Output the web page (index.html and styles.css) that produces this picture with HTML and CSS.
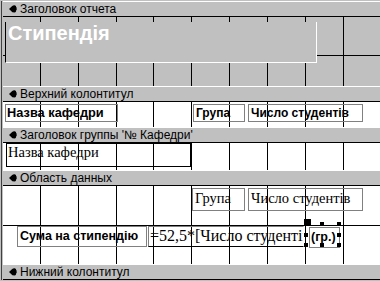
FILE: index.html
```html
<!DOCTYPE html>
<html lang="uk">
<head>
<meta charset="utf-8">
<title>Стипендія — конструктор отчета</title>
<link rel="stylesheet" href="styles.css">
</head>
<body>
<div class="designer">

  <div class="bar">
    <svg class="bar-icon" viewBox="0 0 8 8" aria-hidden="true"><path d="M0 4 L3.2 1 C4 0.3 5.2 0 6 0.4 C7 0.6 7.3 1.3 7 2 C8 2.4 8 3.4 7.4 3.8 C8 4.3 7.8 5.4 7 5.6 C7.3 6.4 6.8 7.4 5.6 7.4 L3.4 7.2 Z"/></svg>
    <span>Заголовок отчета</span>
  </div>
  <div class="section sec-report">
    <div class="ctl title">Стипендія</div>
  </div>

  <div class="bar">
    <svg class="bar-icon" viewBox="0 0 8 8" aria-hidden="true"><path d="M0 4 L3.2 1 C4 0.3 5.2 0 6 0.4 C7 0.6 7.3 1.3 7 2 C8 2.4 8 3.4 7.4 3.8 C8 4.3 7.8 5.4 7 5.6 C7.3 6.4 6.8 7.4 5.6 7.4 L3.4 7.2 Z"/></svg>
    <span>Верхний колонтитул</span>
  </div>
  <div class="section sec-page white">
    <div class="ctl label ph-name">Назва кафедри</div>
    <div class="ctl label ph-group">Група</div>
    <div class="ctl label ph-count">Число студентів</div>
  </div>

  <div class="bar">
    <svg class="bar-icon" viewBox="0 0 8 8" aria-hidden="true"><path d="M0 4 L3.2 1 C4 0.3 5.2 0 6 0.4 C7 0.6 7.3 1.3 7 2 C8 2.4 8 3.4 7.4 3.8 C8 4.3 7.8 5.4 7 5.6 C7.3 6.4 6.8 7.4 5.6 7.4 L3.4 7.2 Z"/></svg>
    <span>Заголовок группы '&#x2116; Кафедри'</span>
  </div>
  <div class="section sec-group white">
    <div class="ctl field gh-name">Назва кафедри</div>
  </div>

  <div class="bar">
    <svg class="bar-icon" viewBox="0 0 8 8" aria-hidden="true"><path d="M0 4 L3.2 1 C4 0.3 5.2 0 6 0.4 C7 0.6 7.3 1.3 7 2 C8 2.4 8 3.4 7.4 3.8 C8 4.3 7.8 5.4 7 5.6 C7.3 6.4 6.8 7.4 5.6 7.4 L3.4 7.2 Z"/></svg>
    <span>Область данных</span>
  </div>
  <div class="section sec-data white">
    <div class="ctl field gray d-group">Група</div>
    <div class="ctl field gray d-count">Число студентів</div>
    <div class="ctl label d-sum">Сума на стипендію</div>
    <div class="ctl field expr">=52,5*[Число студентів]</div>
    <div class="ctl label d-gr">(гр.)</div>
    <span class="handle big h-tl"></span>
    <span class="handle h-tm"></span>
    <span class="handle h-tr"></span>
    <span class="handle h-ml"></span>
    <span class="handle h-mr"></span>
    <span class="handle h-bl"></span>
    <span class="handle h-bm"></span>
    <span class="handle h-br"></span>
  </div>

  <div class="bar">
    <svg class="bar-icon" viewBox="0 0 8 8" aria-hidden="true"><path d="M0 4 L3.2 1 C4 0.3 5.2 0 6 0.4 C7 0.6 7.3 1.3 7 2 C8 2.4 8 3.4 7.4 3.8 C8 4.3 7.8 5.4 7 5.6 C7.3 6.4 6.8 7.4 5.6 7.4 L3.4 7.2 Z"/></svg>
    <span>Нижний колонтитул</span>
  </div>

</div>
</body>
</html>
```
FILE: styles.css
```css
html, body {
  margin: 0;
  padding: 0;
}
body {
  background: #c0c0c0;
  width: 380px;
  height: 281px;
  overflow: hidden;
  padding-top: 1px;
  box-sizing: border-box;
  font-family: "Liberation Sans", Arial, sans-serif;
}
.designer {
  margin-left: 1px;
  border-left: 1px solid #404040;
  padding-left: 1px;
}

/* section selector bars */
.bar {
  height: 14px;
  border-top: 1px solid #ffffff;
  border-bottom: 1px solid #000000;
  background: #c0c0c0;
  display: flex;
  align-items: center;
  gap: 3px;
  padding-left: 6px;
  font-size: 12px;
  color: #000;
  white-space: nowrap;
}
.bar-icon {
  width: 8px;
  height: 8px;
  fill: #000;
  flex: none;
}

/* design surface sections with the 1 cm grid */
.section {
  position: relative;
  background-color: #c0c0c0;
  background-image:
    linear-gradient(#000, #000), linear-gradient(#000, #000), linear-gradient(#000, #000),
    linear-gradient(#000, #000), linear-gradient(#000, #000), linear-gradient(#000, #000),
    linear-gradient(#000, #000), linear-gradient(#000, #000), linear-gradient(#000, #000);
  background-repeat: no-repeat;
  background-size: 1px 100%;
  background-position:
    37px 0, 75px 0, 113px 0, 150px 0, 188px 0, 226px 0, 264px 0, 302px 0, 340px 0;
}
.section.white {
  background-color: #ffffff;
}
.sec-report {
  height: 69px;
  background-image:
    linear-gradient(#000, #000), linear-gradient(#000, #000), linear-gradient(#000, #000),
    linear-gradient(#000, #000), linear-gradient(#000, #000), linear-gradient(#000, #000),
    linear-gradient(#000, #000), linear-gradient(#000, #000), linear-gradient(#000, #000),
    linear-gradient(#000, #000);
  background-size: 1px 100%, 1px 100%, 1px 100%, 1px 100%, 1px 100%, 1px 100%, 1px 100%, 1px 100%, 1px 100%, 100% 1px;
  background-position:
    37px 0, 75px 0, 113px 0, 150px 0, 188px 0, 226px 0, 264px 0, 302px 0, 340px 0, 0 38px;
}
.sec-page { height: 25px; }
.sec-group { height: 27px; }
.sec-data {
  height: 78px;
  background-image:
    linear-gradient(#000, #000), linear-gradient(#000, #000), linear-gradient(#000, #000),
    linear-gradient(#000, #000), linear-gradient(#000, #000), linear-gradient(#000, #000),
    linear-gradient(#000, #000), linear-gradient(#000, #000), linear-gradient(#000, #000),
    linear-gradient(#000, #000);
  background-size: 1px 100%, 1px 100%, 1px 100%, 1px 100%, 1px 100%, 1px 100%, 1px 100%, 1px 100%, 1px 100%, 100% 1px;
  background-position:
    37px 0, 75px 0, 113px 0, 150px 0, 188px 0, 226px 0, 264px 0, 302px 0, 340px 0, 0 39px;
}

/* controls placed on the design canvas */
.ctl {
  position: absolute;
  box-sizing: border-box;
  white-space: nowrap;
  overflow: hidden;
  color: #000;
}
.title {
  left: 2px;
  top: 5px;
  width: 312px;
  height: 41px;
  background: #c0c0c0;
  border-left: 1px solid #000;
  border-right: 1px solid #fff;
  border-bottom: 1px solid #fff;
  padding-left: 2px;
  font-weight: bold;
  font-size: 20px;
  line-height: 23px;
  color: #fff;
}
.label {
  border: 1px solid #808080;
  font-weight: bold;
  font-size: 12px;
  line-height: 16px;
  padding-left: 1px;
}
.field {
  border: 1px solid #000;
  font-family: "Liberation Serif", "Times New Roman", serif;
  font-size: 14.5px;
  line-height: 17px;
  padding-left: 1px;
}
.field.gray {
  border-color: #808080;
  padding-top: 1px;
  padding-left: 2px;
}

.ph-name { left: 2px; top: 2px; width: 113px; height: 18px; font-size: 12.8px; }
.ph-group { left: 190px; top: 2px; width: 52px; height: 18px; padding-left: 2px; }
.ph-count { left: 245px; top: 2px; width: 115px; height: 18px; padding-left: 2px; }

.gh-name { left: 3px; top: 0; width: 185px; height: 24px; }

.d-group { left: 189px; top: 2px; width: 53px; height: 23px; }
.d-count { left: 245px; top: 2px; width: 115px; height: 23px; padding-left: 3px; }
.d-sum { left: 14px; top: 40px; width: 130px; height: 21px; padding-left: 2px; line-height: 18px; font-size: 12.5px; }
.expr {
  left: 145px;
  top: 40px;
  width: 156px;
  height: 21px;
  border-color: #808080 transparent #000 #808080;
  font-size: 16px;
  line-height: 18px;
}
.d-gr { left: 306px; top: 41px; width: 31px; height: 21px; padding-left: 1px; line-height: 18px; font-size: 12.5px; }

/* selection handles of the selected control */
.handle {
  position: absolute;
  width: 4px;
  height: 4px;
  background: #000;
}
.handle.big { width: 7px; height: 7px; }
.h-tl { left: 301px; top: 33px; }
.h-tm { left: 317px; top: 36px; }
.h-tr { left: 334px; top: 36px; }
.h-ml { left: 301px; top: 47px; }
.h-mr { left: 334px; top: 47px; }
.h-bl { left: 301px; top: 57px; }
.h-bm { left: 317px; top: 57px; }
.h-br { left: 334px; top: 57px; }
```
